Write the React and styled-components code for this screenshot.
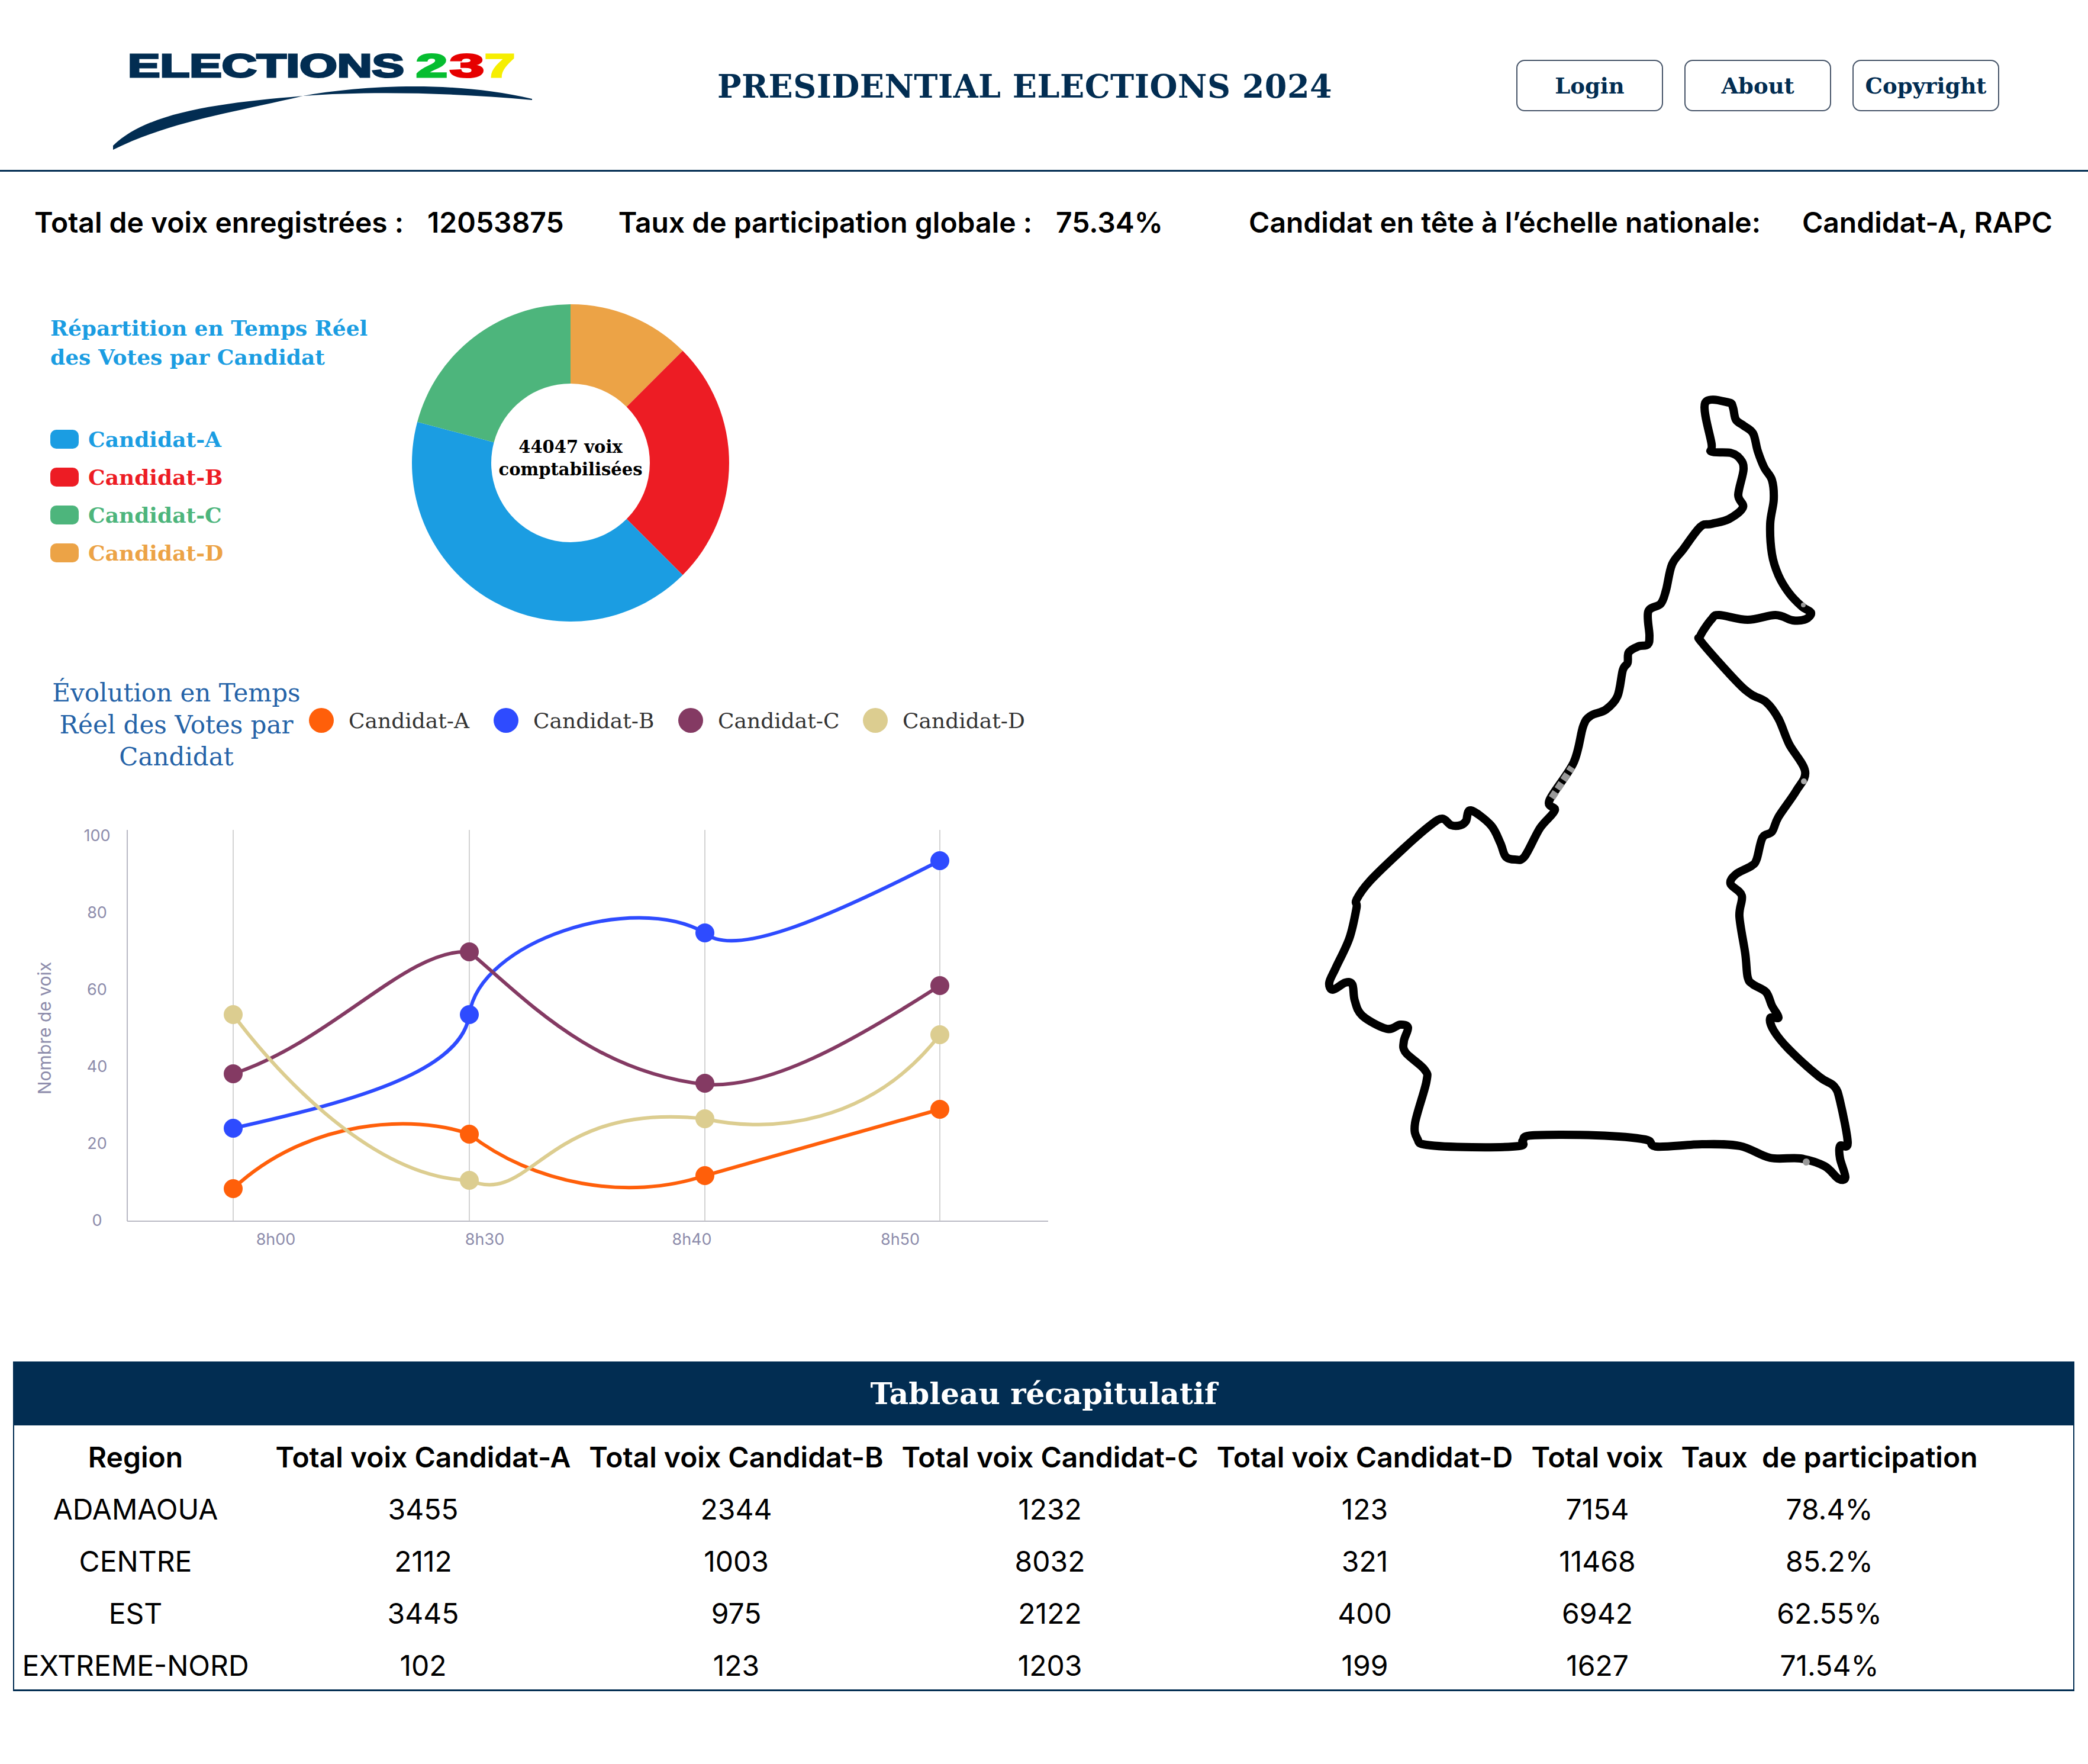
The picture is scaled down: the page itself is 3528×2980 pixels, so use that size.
import styled, { createGlobalStyle } from "styled-components";

const GlobalStyle = createGlobalStyle`
  body {
    margin: 0;
    background: #fff;
    font-family: Inter, "Liberation Sans", sans-serif;
  }
`;

const NAVY = "#022d52";
const SLAB = `"DejaVu Serif", "Liberation Serif", serif`;

// candidates
const candidates = [
  { name: "Candidat-A", color: "#1b9de2" },
  { name: "Candidat-B", color: "#ed1c24" },
  { name: "Candidat-C", color: "#4db57c" },
  { name: "Candidat-D", color: "#eca346" },
];

const slices = [
  { color: "#eca346", from: 0, to: 45 },
  { color: "#ed1c24", from: 45, to: 135 },
  { color: "#1b9de2", from: 135, to: 285 },
  { color: "#4db57c", from: 285, to: 360 },
];

// curves are taken off the picture, in page pixels
const series = [
  {
    name: "Candidat-A",
    color: "#ff5f0a",
    dots: [[394, 2008], [793, 1916], [1191, 1986], [1588, 1874]],
    line: "M394 2008 C520 1890 700 1882 793 1916 C900 2000 1060 2030 1191 1986 L1588 1874",
  },
  {
    name: "Candidat-B",
    color: "#2e4bff",
    dots: [[394, 1906], [793, 1714], [1191, 1576], [1588, 1454]],
    line: "M394 1906 C600 1860 780 1810 793 1714 C810 1590 1070 1506 1191 1576 C1240 1620 1400 1550 1588 1454",
  },
  {
    name: "Candidat-C",
    color: "#843a63",
    dots: [[394, 1814], [793, 1608], [1191, 1830], [1588, 1665]],
    line: "M394 1814 C560 1760 690 1600 793 1608 C890 1690 1000 1810 1191 1832 C1300 1840 1440 1760 1588 1665",
  },
  {
    name: "Candidat-D",
    color: "#dccd90",
    dots: [[394, 1714], [793, 1994], [1191, 1890], [1588, 1748]],
    line: "M394 1714 C450 1790 620 1990 793 1994 C900 2040 920 1860 1191 1890 C1300 1915 1470 1900 1588 1748",
  },
];

const yTicks = [[100, 1411], [80, 1541], [60, 1671], [40, 1801], [20, 1931], [0, 2061]];
const xTicks = [["8h00", 466], ["8h30", 819], ["8h40", 1169], ["8h50", 1521]];

const mapOutline = [
  [2881, 681], [2921, 680], [2928, 688], [2933, 709], [2946, 719], [2962, 732], [2970, 762], [2981, 790],
  [2994, 811], [2997, 844], [2991, 885], [2994, 936], [3005, 972], [3023, 1002], [3045, 1025], [3060, 1035],
  [3051, 1046], [3029, 1048], [3000, 1039], [2953, 1047], [2905, 1039], [2892, 1046], [2873, 1074], [2876, 1086],
  [2933, 1150], [2959, 1173], [2984, 1186], [3005, 1214], [3023, 1257], [3050, 1303], [3035, 1336], [3005, 1380],
  [2994, 1405], [2978, 1415], [2968, 1452], [2959, 1463], [2933, 1477], [2924, 1493], [2943, 1513], [2939, 1548],
  [2949, 1612], [2953, 1651], [2962, 1663], [2984, 1676], [2994, 1699], [3005, 1719], [2991, 1720], [2997, 1741],
  [3023, 1773], [3074, 1819], [3099, 1835], [3109, 1860], [3122, 1931], [3109, 1936], [3109, 1957], [3118, 1989],
  [3106, 1991], [3083, 1970], [3042, 1957], [2991, 1956], [2940, 1936], [2876, 1933], [2799, 1937], [2780, 1925],
  [2697, 1918], [2589, 1918], [2573, 1927], [2567, 1936], [2487, 1938], [2410, 1934], [2395, 1924], [2391, 1897],
  [2410, 1828], [2407, 1807], [2375, 1778], [2372, 1759], [2379, 1736], [2366, 1731], [2343, 1738], [2302, 1716],
  [2289, 1690], [2285, 1663], [2273, 1660], [2252, 1672], [2246, 1660], [2257, 1635], [2280, 1585], [2292, 1534],
  [2292, 1520], [2315, 1488], [2372, 1433], [2417, 1394], [2437, 1383], [2452, 1394], [2468, 1394], [2477, 1387],
  [2485, 1369], [2519, 1394], [2535, 1424], [2544, 1447], [2560, 1452], [2576, 1447], [2602, 1399], [2627, 1369],
  [2618, 1352], [2659, 1288], [2675, 1227], [2688, 1209], [2713, 1199], [2733, 1176], [2742, 1132], [2750, 1120],
  [2752, 1102], [2768, 1092], [2784, 1089], [2787, 1074], [2785, 1033], [2806, 1020], [2815, 997], [2825, 954],
  [2844, 928], [2873, 890], [2892, 885], [2921, 877], [2945, 857], [2937, 836], [2946, 793], [2940, 775],
  [2924, 765], [2892, 763], [2892, 750],
];

const rows = [
  ["ADAMAOUA", "3455", "2344", "1232", "123", "7154", "78.4%"],
  ["CENTRE", "2112", "1003", "8032", "321", "11468", "85.2%"],
  ["EST", "3445", "975", "2122", "400", "6942", "62.55%"],
  ["EXTREME-NORD", "102", "123", "1203", "199", "1627", "71.54%"],
];
const columns = ["Region", "Total voix Candidat-A", "Total voix Candidat-B", "Total voix Candidat-C", "Total voix Candidat-D", "Total voix", "Taux  de participation"];
const columnWidths = [419, 544, 514, 546, 518, 268, 516];

// smooth closed line through a list of points
const closedSpline = (pts) => {
  const n = pts.length;
  const at = (i) => pts[(i + n) % n];
  let d = `M${pts[0][0]} ${pts[0][1]}`;
  for (let i = 0; i < n; i++) {
    const [p0, p1, p2, p3] = [at(i - 1), at(i), at(i + 1), at(i + 2)];
    const c1 = [p1[0] + (p2[0] - p0[0]) / 6, p1[1] + (p2[1] - p0[1]) / 6];
    const c2 = [p2[0] - (p3[0] - p1[0]) / 6, p2[1] - (p3[1] - p1[1]) / 6];
    d += ` C${c1[0].toFixed(1)} ${c1[1].toFixed(1)} ${c2[0].toFixed(1)} ${c2[1].toFixed(1)} ${p2[0]} ${p2[1]}`;
  }
  return d + " Z";
};

const polar = (r, deg) => {
  const a = (deg * Math.PI) / 180;
  return [268 + r * Math.sin(a), 268 - r * Math.cos(a)];
};

const slicePath = ({ from, to }) => {
  const [a, b] = polar(268, from);
  const [c, d] = polar(268, to);
  const [e, f] = polar(134, to);
  const [g, h] = polar(134, from);
  const large = to - from > 180 ? 1 : 0;
  return `M${a} ${b} A268 268 0 ${large} 1 ${c} ${d} L${e} ${f} A134 134 0 ${large} 0 ${g} ${h} Z`;
};

function Logo() {
  return (
    <LogoSvg viewBox="180 80 730 180">
      <g fontFamily="Liberation Sans, Arial, sans-serif" fontWeight="700" fontSize="55" strokeWidth="3">
        <text x="216" y="131" textLength="467" lengthAdjust="spacingAndGlyphs" fill={NAVY} stroke={NAVY}>ELECTIONS</text>
        <text x="703" y="131" textLength="53" lengthAdjust="spacingAndGlyphs" fill="#06bd30" stroke="#06bd30">2</text>
        <text x="760" y="131" textLength="58" lengthAdjust="spacingAndGlyphs" fill="#e60000" stroke="#e60000">3</text>
        <text x="819" y="131" textLength="51" lengthAdjust="spacingAndGlyphs" fill="#f6ee00" stroke="#f6ee00">7</text>
      </g>
      <path
        d="M191 247 C 250 190, 370 175, 512 163 C 600 147, 760 135, 899 168 L899 170 C 760 157, 620 155, 512 163 C 400 190, 290 205, 191 254 Z"
        fill={NAVY}
      />
    </LogoSvg>
  );
}

function Donut() {
  return (
    <DonutWrap>
      <svg width="536" height="536" viewBox="0 0 536 536">
        {slices.map((s) => (
          <path key={s.color} d={slicePath(s)} fill={s.color} />
        ))}
      </svg>
      <DonutLabel>
        44047 voix
        <br />
        comptabilisées
      </DonutLabel>
    </DonutWrap>
  );
}

function Chart() {
  return (
    <ChartSvg viewBox="40 1390 1760 730">
      <line x1="215" y1="1402" x2="215" y2="2063" stroke="#b9b9c4" strokeWidth="2" />
      <line x1="215" y1="2063" x2="1771" y2="2063" stroke="#b9b9c4" strokeWidth="2" />
      {[394, 793, 1191, 1588].map((x) => (
        <line key={x} x1={x} y1="1402" x2={x} y2="2063" stroke="#c4c4c4" strokeWidth="1.5" />
      ))}
      <g fontFamily="Inter, sans-serif" fontSize="27" fill="#8d8cab" textAnchor="middle">
        {yTicks.map(([v, y]) => (
          <text key={v} x="164" y={y + 10}>{v}</text>
        ))}
        {xTicks.map(([t, x]) => (
          <text key={t} x={x} y="2103">{t}</text>
        ))}
        <text transform="translate(86 1737) rotate(-90)" fontSize="30">Nombre de voix</text>
      </g>
      {series.map((s) => (
        <g key={s.name}>
          <path d={s.line} fill="none" stroke={s.color} strokeWidth="6" />
          {s.dots.map(([x, y]) => (
            <circle key={x} cx={x} cy={y} r="16" fill={s.color} />
          ))}
        </g>
      ))}
    </ChartSvg>
  );
}

function CameroonMap() {
  return (
    <MapSvg viewBox="2230 660 910 1345">
      <path d={closedSpline(mapOutline)} fill="none" stroke="#000" strokeWidth="14" strokeLinejoin="round" />
      {/* watermark leftovers of the source image */}
      <path d="M2622 1348 L2656 1296" stroke="#999" strokeWidth="12" strokeDasharray="12 6" fill="none" />
      <circle cx="3047" cy="1022" r="4" fill="#999" />
      <circle cx="3048" cy="1320" r="5" fill="#aaa" />
      <circle cx="3052" cy="1963" r="6" fill="#999" />
    </MapSvg>
  );
}

export default function App() {
  return (
    <>
      <GlobalStyle />
      <Header>
        <Logo />
        <Title>PRESIDENTIAL ELECTIONS 2024</Title>
        <Nav>
          <NavButton>Login</NavButton>
          <NavButton>About</NavButton>
          <NavButton>Copyright</NavButton>
        </Nav>
      </Header>

      <Stats>
        <Stat $gap={40}>
          <span>Total de voix enregistrées :</span>
          <span>12053875</span>
        </Stat>
        <Stat $gap={40} $offset={92}>
          <span>Taux de participation globale :</span>
          <span>75.34%</span>
        </Stat>
        <Stat $gap={70} $offset={145}>
          <span>Candidat en tête à l’échelle nationale:</span>
          <span>Candidat-A, RAPC</span>
        </Stat>
      </Stats>

      <Main>
        <LeftColumn>
          <DonutRow>
            <DonutText>
              <DonutTitle>
                Répartition en Temps Réel
                <br />
                des Votes par Candidat
              </DonutTitle>
              <Legend>
                {candidates.map((c) => (
                  <LegendRow key={c.name} $color={c.color}>
                    <Swatch $color={c.color} />
                    {c.name}
                  </LegendRow>
                ))}
              </Legend>
            </DonutText>
            <Donut />
          </DonutRow>

          <EvolutionHeader>
            <EvolutionTitle>Évolution en Temps Réel des Votes par Candidat</EvolutionTitle>
            <ChartLegend>
              {series.map((s) => (
                <ChartLegendItem key={s.name}>
                  <Dot $color={s.color} />
                  {s.name}
                </ChartLegendItem>
              ))}
            </ChartLegend>
          </EvolutionHeader>
          <Chart />
        </LeftColumn>
        <CameroonMap />
      </Main>

      <Summary>
        <SummaryTitle>Tableau récapitulatif</SummaryTitle>
        <SummaryTable>
          <colgroup>
            {columnWidths.map((w, i) => (
              <Col key={i} $width={w} />
            ))}
          </colgroup>
          <thead>
            <tr>
              {columns.map((c) => (
                <HeadCell key={c}>{c}</HeadCell>
              ))}
            </tr>
          </thead>
          <tbody>
            {rows.map((r) => (
              <tr key={r[0]}>
                {r.map((v, i) => (
                  <Cell key={i}>{v}</Cell>
                ))}
              </tr>
            ))}
          </tbody>
        </SummaryTable>
      </Summary>
    </>
  );
}

const Header = styled.header`
  display: flex;
  align-items: center;
  height: 287px;
  padding-right: 150px;
  border-bottom: 3px solid ${NAVY};
`;
const LogoSvg = styled.svg`
  width: 730px;
  height: 180px;
  margin: 50px 0 0 180px;
  flex: none;
`;
const Title = styled.h1`
  margin: 4px 0 0 302px;
  font-family: ${SLAB};
  font-weight: 700;
  font-size: 54px;
  letter-spacing: 0.5px;
  color: ${NAVY};
  white-space: nowrap;
`;
const Nav = styled.nav`
  display: flex;
  gap: 36px;
  margin: 2px 0 0 auto;
`;
const NavButton = styled.button`
  width: 248px;
  height: 87px;
  padding: 0;
  background: #fff;
  border: 2px solid #475569;
  border-radius: 14px;
  font-family: ${SLAB};
  font-weight: 700;
  font-size: 37px;
  color: ${NAVY};
`;

const Stats = styled.section`
  display: flex;
  align-items: center;
  height: 170px;
  padding-left: 58px;
  font-size: 48px;
  font-weight: 600;
  color: #000;
  white-space: nowrap;
`;
const Stat = styled.div`
  display: flex;
  gap: ${(p) => p.$gap}px;
  margin-left: ${(p) => p.$offset || 0}px;
`;

const Main = styled.main`
  display: flex;
  align-items: flex-start;
`;
const LeftColumn = styled.div`
  width: 2230px;
  padding-left: 40px;
  box-sizing: border-box;
  flex: none;
`;
const DonutRow = styled.div`
  display: flex;
  margin: 54px 0 0 45px;
`;
const DonutText = styled.div`
  width: 611px;
  padding-top: 16px;
`;
const DonutTitle = styled.h2`
  margin: 0;
  font-family: ${SLAB};
  font-weight: 700;
  font-size: 36px;
  line-height: 49px;
  color: #1b9de2;
`;
const Legend = styled.div`
  display: flex;
  flex-direction: column;
  gap: 32px;
  margin-top: 98px;
`;
const LegendRow = styled.div`
  display: flex;
  align-items: center;
  gap: 16px;
  height: 32px;
  font-family: ${SLAB};
  font-weight: 700;
  font-size: 36px;
  color: ${(p) => p.$color};
`;
const Swatch = styled.span`
  width: 48px;
  height: 32px;
  border-radius: 10px;
  background: ${(p) => p.$color};
`;
const DonutWrap = styled.div`
  position: relative;
  width: 536px;
  height: 536px;
  svg {
    display: block;
  }
`;
const DonutLabel = styled.div`
  position: absolute;
  left: 0;
  right: 0;
  top: 222px;
  text-align: center;
  font-family: ${SLAB};
  font-weight: 700;
  font-size: 29px;
  line-height: 38px;
  color: #000;
`;

const EvolutionHeader = styled.div`
  display: flex;
  align-items: center;
  margin: 94px 0 0 46px;
`;
const EvolutionTitle = styled.h2`
  width: 424px;
  margin: 0;
  font-family: ${SLAB};
  font-weight: 400;
  font-size: 42px;
  line-height: 54px;
  text-align: center;
  color: #2563a8;
`;
const ChartLegend = styled.div`
  display: flex;
  margin-left: 12px;
  padding-bottom: 16px;
`;
const ChartLegendItem = styled.div`
  display: flex;
  align-items: center;
  gap: 25px;
  width: 312px;
  font-family: ${SLAB};
  font-size: 36px;
  color: #333;
`;
const Dot = styled.span`
  width: 42px;
  height: 42px;
  border-radius: 50%;
  background: ${(p) => p.$color};
`;
const ChartSvg = styled.svg`
  display: block;
  width: 1760px;
  height: 730px;
  margin-top: 84px;
`;
const MapSvg = styled.svg`
  flex: none;
  width: 910px;
  height: 1345px;
  margin-top: 200px;
`;

const Summary = styled.section`
  width: 3483px;
  height: 557px;
  margin: 180px 0 0 22px;
  box-sizing: border-box;
  border: 2px solid ${NAVY};
  border-bottom-width: 3px;
`;
const SummaryTitle = styled.h2`
  margin: 0;
  height: 106px;
  background: ${NAVY};
  color: #fff;
  text-align: center;
  font-family: ${SLAB};
  font-weight: 700;
  font-size: 50px;
  line-height: 106px;
`;
const SummaryTable = styled.table`
  table-layout: fixed;
  width: 3325px;
  margin-top: 9px;
  border-collapse: collapse;
`;
const Col = styled.col`
  width: ${(p) => p.$width}px;
`;
const HeadCell = styled.th`
  height: 88px;
  padding: 0;
  font-size: 48px;
  font-weight: 600;
  color: #000;
  white-space: pre;
  &:first-child {
    padding-right: 9px;
  }
`;
const Cell = styled.td`
  height: 88px;
  padding: 0;
  font-size: 48px;
  font-weight: 400;
  color: #000;
  text-align: center;
  white-space: nowrap;
  &:first-child {
    padding-right: 9px;
  }
`;
